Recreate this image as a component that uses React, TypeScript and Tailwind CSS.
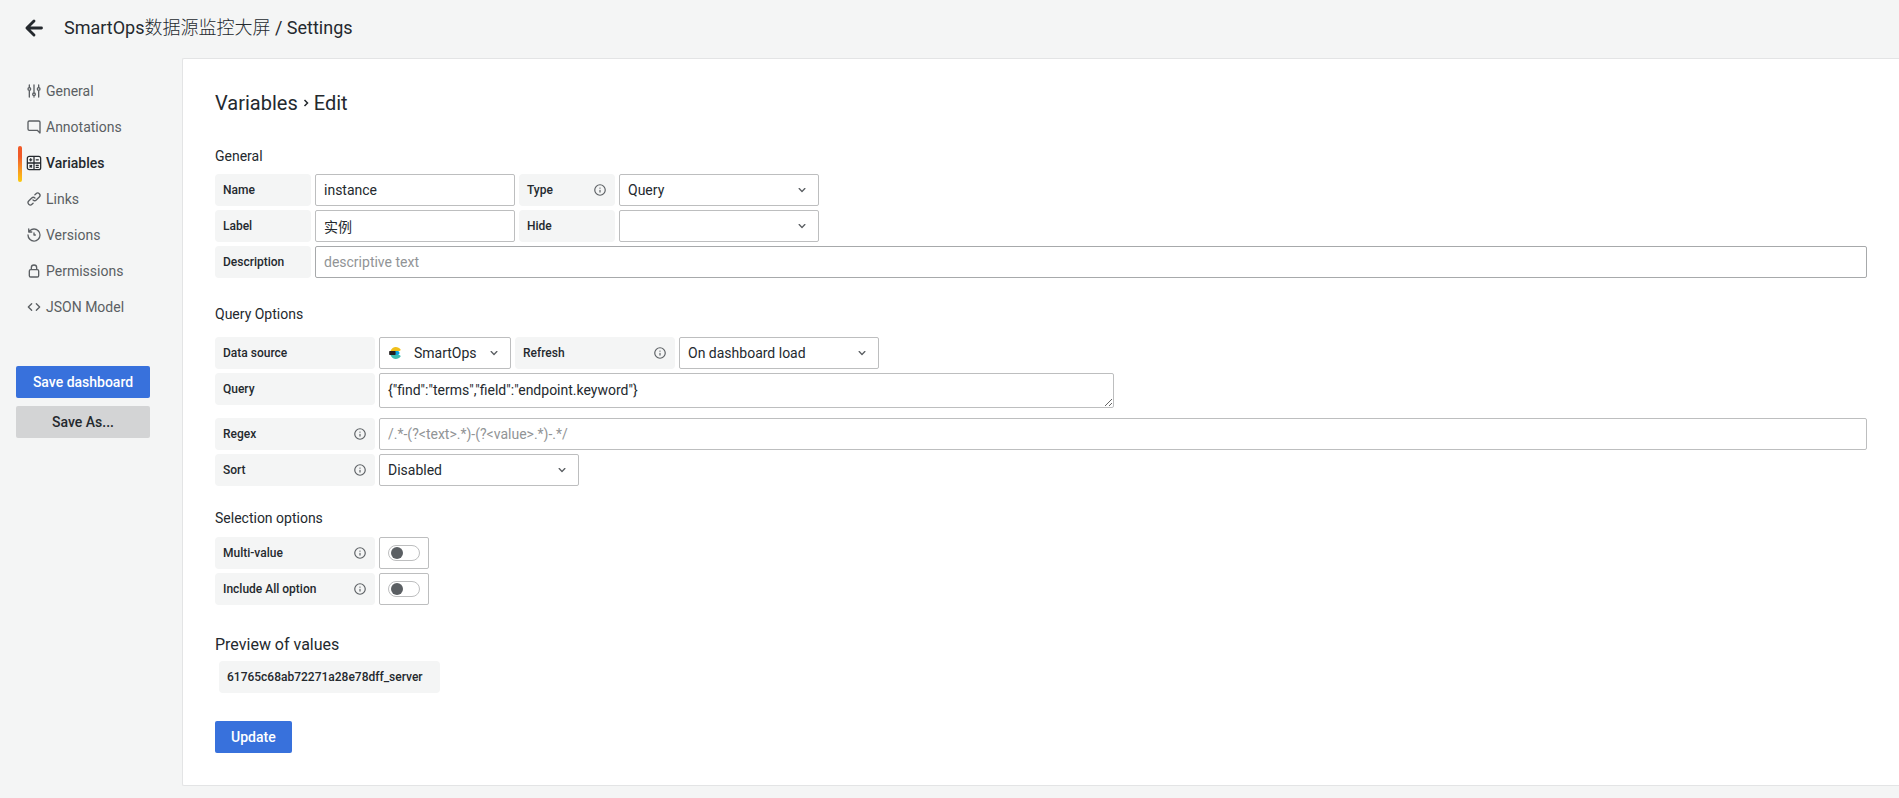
import React, { useState } from 'react';
import clsx from 'clsx';

interface IconProps {
  name: IconName;
  className?: string;
}

const solidIcons = {
  info: 'M12,2A10,10,0,1,0,22,12,10,10,0,0,0,12,2Zm0,18a8,8,0,1,1,8-8A8,8,0,0,1,12,20Zm0-8.5a1,1,0,0,0-1,1v3a1,1,0,0,0,2,0v-3A1,1,0,0,0,12,11.5Zm0-4a1.25,1.25,0,1,0,1.25,1.25A1.25,1.25,0,0,0,12,7.5Z',
  angleDown:
    'M17,9.17a1,1,0,0,0-1.41,0L12,12.71,8.46,9.17a1,1,0,0,0-1.41,0,1,1,0,0,0,0,1.42l4.24,4.24a1,1,0,0,0,1.42,0L17,10.59A1,1,0,0,0,17,9.17Z',
  comment:
    'M19,2H5A3,3,0,0,0,2,5V15a3,3,0,0,0,3,3H16.59l3.7,3.71A1,1,0,0,0,21,22a.84.84,0,0,0,.38-.08A1,1,0,0,0,22,21V5A3,3,0,0,0,19,2Zm1,16.59-2.29-2.3A1,1,0,0,0,17,16H5a1,1,0,0,1-1-1V5A1,1,0,0,1,5,4H19a1,1,0,0,1,1,1Z',
  link: 'M10,17.55,8.23,19.27a2.47,2.47,0,0,1-3.5-3.5l4.54-4.55a2.46,2.46,0,0,1,3.39-.09l.12.1a1,1,0,0,0,1.4-1.43A2.75,2.75,0,0,0,14,9.59a4.46,4.46,0,0,0-6.09.22L3.31,14.36a4.48,4.48,0,0,0,6.33,6.33L11.37,19A1,1,0,0,0,10,17.55ZM20.69,3.31a4.49,4.49,0,0,0-6.33,0L12.63,5A1,1,0,0,0,14,6.45l1.73-1.72a2.47,2.47,0,0,1,3.5,3.5l-4.54,4.55a2.46,2.46,0,0,1-3.39.09l-.12-.1a1,1,0,0,0-1.4,1.43,2.75,2.75,0,0,0,.23.21,4.47,4.47,0,0,0,6.09-.22l4.55-4.55A4.49,4.49,0,0,0,20.69,3.31Z',
  history:
    'M12,2A10,10,0,0,0,5.12,4.77V3a1,1,0,0,0-2,0V7.5a1,1,0,0,0,1,1H8.62a1,1,0,0,0,0-2H6.22A8,8,0,1,1,4,12a1,1,0,0,0-2,0A10,10,0,1,0,12,2Zm0,6a1,1,0,0,0-1,1v3a1,1,0,0,0,1,1h2a1,1,0,0,0,0-2H13V9A1,1,0,0,0,12,8Z',
  lock: 'M17,9V7A5,5,0,0,0,7,7V9a3,3,0,0,0-3,3v7a3,3,0,0,0,3,3H17a3,3,0,0,0,3-3V12A3,3,0,0,0,17,9ZM9,7a3,3,0,0,1,6,0V9H9Zm9,12a1,1,0,0,1-1,1H7a1,1,0,0,1-1-1V12a1,1,0,0,1,1-1H17a1,1,0,0,1,1,1Z',
};

const strokeIcons = {
  arrowLeft: 'M21 12H4M12 3.5L3.5 12L12 20.5',
  sliders:
    'M5 3V7M5 13V21M5 7a2 2 0 1 0 0 4a2 2 0 0 0 0-4M5 11V13M12 3V15M12 19V21M12 15a2 2 0 1 0 0 4a2 2 0 0 0 0-4M19 3V7M19 11V21M19 7a2 2 0 1 0 0 4a2 2 0 0 0 0-4',
  calculator:
    'M5 2H19A3 3 0 0 1 22 5V19A3 3 0 0 1 19 22H5A3 3 0 0 1 2 19V5A3 3 0 0 1 5 2ZM12 2V22M2 12H22M5.5 7.2H8.7M7.1 5.6V8.8M15.3 7.2H18.5M6 15.7L8.4 18.1M8.4 15.7L6 18.1M15.3 15.5H18.5M15.3 18.5H18.5',
  code: 'M8.5 7L3.5 12L8.5 17M15.5 7L20.5 12L15.5 17',
};

type IconName = keyof typeof solidIcons | keyof typeof strokeIcons;

const strokeWidths: Partial<Record<IconName, number>> = { arrowLeft: 3.4, calculator: 1.9 };

const Icon: React.FC<IconProps> = ({ name, className = 'size-4' }) => (
  <svg viewBox="0 0 24 24" className={clsx('shrink-0', className)} aria-hidden="true">
    {name in solidIcons ? (
      <path fill="currentColor" d={solidIcons[name as keyof typeof solidIcons]} />
    ) : (
      <path
        fill="none"
        stroke="currentColor"
        strokeWidth={strokeWidths[name] ?? 2}
        strokeLinecap="round"
        strokeLinejoin="round"
        d={strokeIcons[name as keyof typeof strokeIcons]}
      />
    )}
  </svg>
);

const ElasticLogo: React.FC<{ className?: string }> = ({ className }) => (
  <svg viewBox="0 0 24 24" className={className} aria-hidden="true">
    <path fill="#f0bf1a" d="M3 8C5 3 9 0 13.5 0C17.500 0 21 2 23.500 5.500Q22.500 8 20 8Z" />
    <path fill="#3ebeb0" d="M3 16H20Q22.500 16 23.500 18.500C21 22 17.500 24 13.500 24C9 24 5 21 3 16Z" />
    <path fill="#07a5de" d="M12 8H17A4 4 0 0 1 17 16H12Z" />
    <path fill="#231f20" d="M.8 8H12.500Q14 12 12.500 16H.8Q-.4 12 .8 8Z" />
  </svg>
);

interface FieldLabelProps {
  htmlFor: string;
  children: React.ReactNode;
  wide?: boolean;
  info?: boolean;
}

const FieldLabel: React.FC<FieldLabelProps> = ({ htmlFor, children, wide, info }) => (
  <label
    htmlFor={htmlFor}
    className={clsx(
      'flex h-8 shrink-0 items-center justify-between rounded-sm bg-[#f4f5f5] px-2 text-xs font-medium',
      wide ? 'w-40' : 'w-24'
    )}
  >
    {children}
    {info && <Icon name="info" className="size-3.5 text-[#5b5f63]" />}
  </label>
);

interface SelectProps {
  id: string;
  options: string[];
  width?: string;
  logo?: React.ReactNode;
}

const Select: React.FC<SelectProps> = ({ id, options, width = 'w-[200px]', logo }) => (
  <div className={clsx('relative shrink-0', width)}>
    {logo && <span className="pointer-events-none absolute inset-y-0 left-2.5 flex items-center">{logo}</span>}
    <select
      id={id}
      className={clsx(
        'block h-8 w-full appearance-none rounded-xs border border-[#bdbebf] bg-white pr-7 text-sm outline-none',
        logo ? 'pl-[34px]' : 'pl-2'
      )}
    >
      {options.map((option) => (
        <option key={option}>{option}</option>
      ))}
    </select>
    <span className="pointer-events-none absolute inset-y-0 right-[9px] flex items-center text-[#5b5f63]">
      <Icon name="angleDown" />
    </span>
  </div>
);

const inputClass =
  'block h-8 rounded-xs border border-[#bdbebf] bg-white px-2 text-sm outline-none placeholder:text-[#919496]';

const Toggle: React.FC<{ id: string }> = ({ id }) => {
  const [checked, setChecked] = useState(false);

  return (
    <div className="flex h-8 items-center rounded-xs border border-[#bdbebf] px-2">
      <input
        id={id}
        type="checkbox"
        role="switch"
        checked={checked}
        onChange={(e) => setChecked(e.target.checked)}
        className="flex h-4 w-8 appearance-none items-center rounded-full border border-[#bdbebf] bg-white px-0.5 before:size-3 before:rounded-full before:bg-[#5b5f63] checked:justify-end checked:bg-[#3871dc] checked:before:bg-white"
      />
    </div>
  );
};

const navItems: { label: string; icon: IconName }[] = [
  { label: 'General', icon: 'sliders' },
  { label: 'Annotations', icon: 'comment' },
  { label: 'Variables', icon: 'calculator' },
  { label: 'Links', icon: 'link' },
  { label: 'Versions', icon: 'history' },
  { label: 'Permissions', icon: 'lock' },
  { label: 'JSON Model', icon: 'code' },
];

const Sidebar: React.FC = () => (
  <aside className="w-[182px] shrink-0 px-4 pt-4">
    <nav className="flex flex-col">
      {navItems.map(({ label, icon }) => {
        const active = label === 'Variables';
        return (
          <a
            key={label}
            href="#"
            aria-current={active ? 'page' : undefined}
            className={clsx(
              'relative flex h-9 items-center gap-1 pb-0.5 pl-2.5 text-sm',
              active ? 'font-medium text-[#24292e]' : 'text-[#5b5f63]'
            )}
          >
            {active && (
              <span className="absolute inset-y-0 left-0.5 w-1 rounded-xs bg-linear-to-b from-[#f05a28] from-30% to-[#fbca0a]" />
            )}
            <Icon name={icon} />
            {label}
          </a>
        );
      })}
    </nav>
    <div className="mt-10 flex w-[134px] flex-col gap-2">
      <button className="h-8 rounded-xs bg-[#3871dc] text-sm font-medium text-white">Save dashboard</button>
      <button className="h-8 rounded-xs bg-[#d3d4d5] text-sm font-medium">Save As...</button>
    </div>
  </aside>
);

const VariableEditor: React.FC = () => (
  <main className="min-w-0 grow rounded-l-xs border-y border-l border-[#e3e4e5] bg-white p-8">
    <h1 className="flex items-center gap-1 text-xl leading-6">
      Variables
      <svg viewBox="0 0 8 10" className="h-2.5 w-2" aria-hidden="true">
        <path d="M2.5 2L5.5 5L2.5 8" fill="none" stroke="currentColor" strokeWidth="1.5" />
      </svg>
      Edit
    </h1>

    <form onSubmit={(e) => e.preventDefault()}>
      <section className="mt-[31px] flex flex-col gap-1">
        <h2 className="mb-1 text-sm">General</h2>
        <div className="flex gap-1">
          <FieldLabel htmlFor="name">Name</FieldLabel>
          <input id="name" defaultValue="instance" className={clsx(inputClass, 'w-[200px]')} />
          <FieldLabel htmlFor="type" info>
            Type
          </FieldLabel>
          <Select id="type" options={['Query', 'Custom', 'Constant']} />
        </div>
        <div className="flex gap-1">
          <FieldLabel htmlFor="label">Label</FieldLabel>
          <input id="label" defaultValue="实例" className={clsx(inputClass, 'w-[200px]')} />
          <FieldLabel htmlFor="hide">Hide</FieldLabel>
          <Select id="hide" options={['', 'Label', 'Variable']} />
        </div>
        <div className="flex gap-1">
          <FieldLabel htmlFor="description">Description</FieldLabel>
          <input
            id="description"
            placeholder="descriptive text"
            className="block h-8 min-w-0 grow rounded-xs border border-[#a7a9ab] bg-white px-2 text-sm outline-none placeholder:text-[#919496]"
          />
        </div>
      </section>

      <section className="mt-[26px] flex flex-col gap-1">
        <h2 className="mb-[9px] text-sm">Query Options</h2>
        <div className="flex gap-1">
          <FieldLabel htmlFor="datasource" wide>
            Data source
          </FieldLabel>
          <Select
            id="datasource"
            options={['SmartOps']}
            width="w-[132px]"
            logo={<ElasticLogo className="size-3" />}
          />
          <FieldLabel htmlFor="refresh" wide info>
            Refresh
          </FieldLabel>
          <Select id="refresh" options={['On dashboard load', 'On time range change']} />
        </div>
        <div className="mb-1.5 flex gap-1">
          <FieldLabel htmlFor="query" wide>
            Query
          </FieldLabel>
          <textarea
            id="query"
            rows={1}
            spellCheck={false}
            defaultValue={'{"find":"terms","field":"endpoint.keyword"}'}
            className="block h-[35px] w-[735px] rounded-xs border border-[#bdbebf] bg-white px-2 py-1.5 text-sm outline-none"
          />
        </div>
        <div className="flex gap-1">
          <FieldLabel htmlFor="regex" wide info>
            Regex
          </FieldLabel>
          <input
            id="regex"
            placeholder="/.*-(?<text>.*)-(?<value>.*)-.*/"
            className={clsx(inputClass, 'min-w-0 grow')}
          />
        </div>
        <div className="flex gap-1">
          <FieldLabel htmlFor="sort" wide info>
            Sort
          </FieldLabel>
          <Select id="sort" options={['Disabled', 'Alphabetical (asc)', 'Numerical (asc)']} />
        </div>
      </section>

      <section className="mt-[22px] flex flex-col gap-1">
        <h2 className="mb-[5px] text-sm">Selection options</h2>
        <div className="flex gap-1">
          <FieldLabel htmlFor="multi" wide info>
            Multi-value
          </FieldLabel>
          <Toggle id="multi" />
        </div>
        <div className="flex gap-1">
          <FieldLabel htmlFor="include-all" wide info>
            Include All option
          </FieldLabel>
          <Toggle id="include-all" />
        </div>
      </section>

      <section className="mt-7">
        <h2 className="text-base leading-6">Preview of values</h2>
        <div className="mt-1 ml-1 flex">
          <span className="flex h-8 min-w-[221px] items-center rounded-sm bg-[#f4f5f5] px-2 text-xs font-medium">
            61765c68ab72271a28e78dff_server
          </span>
        </div>
      </section>

      <button type="submit" className="mt-7 h-8 rounded-xs bg-[#3871dc] px-4 text-sm font-medium text-white">
        Update
      </button>
    </form>
  </main>
);

export default function App() {
  return (
    <div className="min-h-screen bg-[#f4f5f5] pb-3 font-[Roboto,'Noto_Sans_CJK_SC',sans-serif] text-[#24292e]">
      <header className="flex h-[58px] items-center gap-5 px-6 pb-0.5">
        <button aria-label="Back">
          <Icon name="arrowLeft" className="size-5" />
        </button>
        <div className="text-lg leading-6">
          SmartOps<span className="font-light">数据源监控大屏</span> / Settings
        </div>
      </header>
      <div className="flex">
        <Sidebar />
        <VariableEditor />
      </div>
    </div>
  );
}
